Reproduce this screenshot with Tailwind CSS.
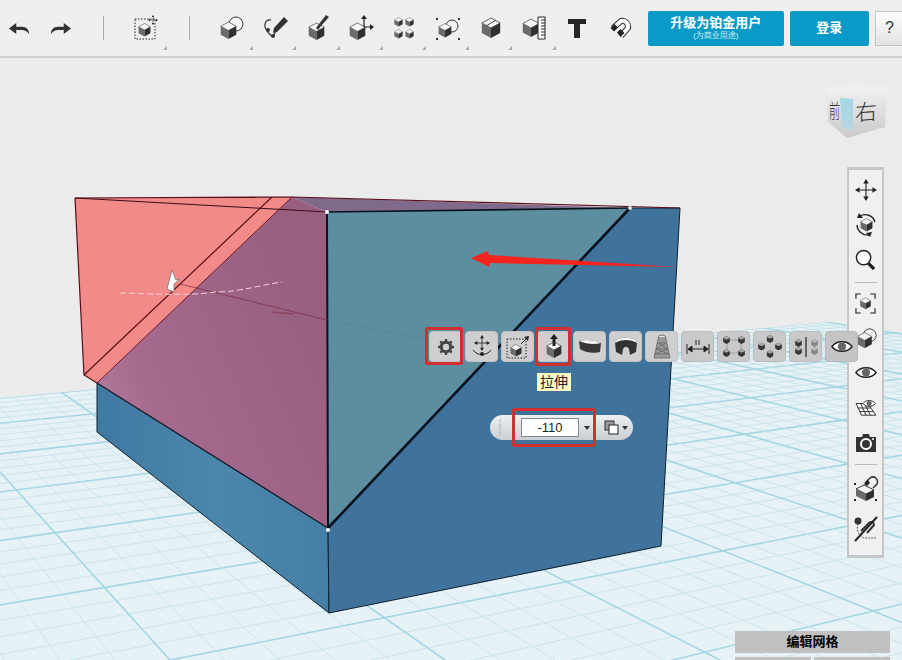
<!DOCTYPE html>
<html lang="zh">
  <head>
    <meta charset="UTF-8" />
    <meta name="viewport" content="width=device-width, initial-scale=1.0" />
    <title>123D Design</title>
    <script src="https://cdn.jsdelivr.net/npm/@tailwindcss/browser@4"></script>
  </head>
  <body class="bg-[#ebebeb] font-['Liberation_Sans','Noto_Sans_CJK_SC',sans-serif]">
    <!-- shared icon parts -->
    <svg class="hidden">
      <symbol id="cube" viewBox="0 0 24 26">
        <polygon points="12,1 23,7 12,13 1,7" fill="#f5f5f5" stroke="#444" stroke-width="1" />
        <polygon points="1,7 12,13 12,25 1,19" fill="#6b6b6b" />
        <polygon points="23,7 12,13 12,25 23,19" fill="#303030" />
      </symbol>
      <symbol id="dot" viewBox="0 0 10 12">
        <polygon points="5,0 10,3 10,9 5,12 0,9 0,3" fill="#363636" />
        <polygon points="5,0 10,3 5,5.5 0,3" fill="#a8a8a8" />
      </symbol>
      <symbol id="eye" viewBox="0 0 24 16">
        <path d="M1 8 C6 1 18 1 23 8 C18 15 6 15 1 8 Z" fill="#fff" stroke="#222" stroke-width="1.6" />
        <circle cx="12" cy="8" r="4.5" fill="#666" />
      </symbol>
      <symbol id="cross" viewBox="0 0 24 24">
        <path d="M12 2 V22 M2 12 H22" stroke="#222" stroke-width="1.2" fill="none" />
        <path d="M12 0 L15 5 H9 Z M12 24 L15 19 H9 Z M0 12 L5 9 V15 Z M24 12 L19 9 V15 Z" fill="#222" />
      </symbol>
    </svg>

    <div class="relative flex flex-col w-[902px] h-[660px] overflow-hidden">
      <!-- top toolbar -->
      <header class="flex items-center h-[58px] shrink-0 bg-[#efefef] border-b-2 border-[#cfcfcf]">
        <div class="flex items-center justify-center shrink-0 w-[37px] h-[52px]">
          <svg class="w-[22px] h-[13px]" viewBox="0 0 24 14"><path d="M1 7 L9 1 V5 H15 C20 5 23 8 23 13 C21 10 18 8.5 15 8.5 H9 V13 Z" fill="#333" /></svg>
        </div>
        <div class="flex items-center justify-center shrink-0 w-[47px] h-[52px]">
          <svg class="w-[22px] h-[13px] -scale-x-100" viewBox="0 0 24 14"><path d="M1 7 L9 1 V5 H15 C20 5 23 8 23 13 C21 10 18 8.5 15 8.5 H9 V13 Z" fill="#333" /></svg>
        </div>
        <div class="ml-[19px] shrink-0 w-px h-[24px] bg-[#aaa]"></div>
        <div class="relative flex items-center justify-center shrink-0 w-[85px] h-[52px]">
          <svg class="w-[26px] h-[26px]" viewBox="0 0 26 26">
            <rect x="1" y="4" width="20" height="20" fill="none" stroke="#222" stroke-dasharray="1.5 1.5" />
            <use href="#cube" x="4" y="8" width="13" height="14" />
            <use href="#cross" x="14" y="0" width="10" height="10" />
          </svg>
          <span class="absolute right-[22px] bottom-[4px] w-0 h-0 border-l-[4px] border-l-transparent border-b-[4px] border-b-[#aaa]"></span>
        </div>
        <div class="shrink-0 w-px h-[24px] bg-[#aaa]"></div>
        <div class="ml-[20px] flex shrink-0">
          <div class="relative flex items-center justify-center w-[43.2px] h-[52px]">
            <svg class="w-[26px] h-[26px]" viewBox="0 0 26 26">
              <circle cx="17" cy="9" r="7" fill="#f4f4f4" stroke="#333" />
              <use href="#cube" x="1" y="6" width="17" height="19" />
            </svg>
            <span class="absolute right-0 bottom-[4px] w-0 h-0 border-l-[4px] border-l-transparent border-b-[4px] border-b-[#aaa]"></span>
          </div>
          <div class="relative flex items-center justify-center w-[43.2px] h-[52px]">
            <svg class="w-[26px] h-[26px]" viewBox="0 0 26 26">
              <path d="M9 5 C3 4 1 11 5 16 C7 19 10 21 11 21 C13 19 14 16 14 12" fill="none" stroke="#333" stroke-width="1.2" />
              <circle cx="6" cy="15" r="2" fill="#333" /><circle cx="11" cy="21" r="2" fill="#333" />
              <path d="M12 13 L22 2 L26 6 L15 17 L11 18 Z" fill="#333" />
            </svg>
            <span class="absolute right-0 bottom-[4px] w-0 h-0 border-l-[4px] border-l-transparent border-b-[4px] border-b-[#aaa]"></span>
          </div>
          <div class="relative flex items-center justify-center w-[43.2px] h-[52px]">
            <svg class="w-[26px] h-[26px]" viewBox="0 0 26 26">
              <use href="#cube" x="3" y="7" width="17" height="19" />
              <path d="M11 13 L14 9 L21 0 L24 2 L16 11 L13 15 Z" fill="#333" />
            </svg>
            <span class="absolute right-0 bottom-[4px] w-0 h-0 border-l-[4px] border-l-transparent border-b-[4px] border-b-[#aaa]"></span>
          </div>
          <div class="relative flex items-center justify-center w-[43.2px] h-[52px]">
            <svg class="w-[26px] h-[26px]" viewBox="0 0 26 26">
              <use href="#cube" x="1" y="7" width="17" height="19" />
              <path d="M16 12 V2 M16 12 H24" stroke="#222" stroke-width="1.2" />
              <path d="M16 0 L19 4 H13 Z M26 12 L22 9 V15 Z" fill="#222" />
            </svg>
            <span class="absolute right-0 bottom-[4px] w-0 h-0 border-l-[4px] border-l-transparent border-b-[4px] border-b-[#aaa]"></span>
          </div>
          <div class="relative flex items-center justify-center w-[43.2px] h-[52px]">
            <svg class="w-[22px] h-[22px]" viewBox="0 0 22 22">
              <use href="#cube" x="1" y="0" width="9" height="10" /><use href="#cube" x="12" y="0" width="9" height="10" />
              <use href="#cube" x="1" y="12" width="9" height="10" /><use href="#cube" x="12" y="12" width="9" height="10" />
            </svg>
            <span class="absolute right-0 bottom-[4px] w-0 h-0 border-l-[4px] border-l-transparent border-b-[4px] border-b-[#aaa]"></span>
          </div>
          <div class="relative flex items-center justify-center w-[43.2px] h-[52px]">
            <svg class="w-[26px] h-[26px]" viewBox="0 0 26 26">
              <circle cx="17" cy="11" r="6" fill="#f4f4f4" stroke="#333" />
              <use href="#cube" x="3" y="8" width="14" height="15" />
              <path d="M1 3 h2 v2 h-2 Z M1 23 h2 v2 h-2 Z M23 3 h2 v2 h-2 Z M23 23 h2 v2 h-2 Z" fill="#333" />
            </svg>
            <span class="absolute right-0 bottom-[4px] w-0 h-0 border-l-[4px] border-l-transparent border-b-[4px] border-b-[#aaa]"></span>
          </div>
          <div class="relative flex items-center justify-center w-[43.2px] h-[52px]">
            <svg class="w-[24px] h-[24px]" viewBox="0 0 24 24">
              <use href="#cube" x="2" y="1" width="20" height="22" />
              <path d="M7 10 L17 4" stroke="#444" />
            </svg>
            <span class="absolute right-0 bottom-[4px] w-0 h-0 border-l-[4px] border-l-transparent border-b-[4px] border-b-[#aaa]"></span>
          </div>
          <div class="relative flex items-center justify-center w-[43.2px] h-[52px]">
            <svg class="w-[24px] h-[24px]" viewBox="0 0 24 24">
              <use href="#cube" x="0" y="2" width="18" height="20" />
              <path d="M16 1 H23 V23 H16 Z" fill="#fff" stroke="#222" />
              <path d="M19 4 H23 M19 7 H23 M19 10 H23 M19 13 H23 M19 16 H23 M19 19 H23" stroke="#222" />
            </svg>
            <span class="absolute right-0 bottom-[4px] w-0 h-0 border-l-[4px] border-l-transparent border-b-[4px] border-b-[#aaa]"></span>
          </div>
          <div class="flex items-center justify-center w-[43.2px] h-[52px]">
            <svg class="w-[20px] h-[21px]" viewBox="0 0 20 21"><path d="M1 1 H19 V6 H13 V20 H7 V6 H1 Z" fill="#262626" /></svg>
          </div>
          <div class="flex items-center justify-center w-[43.2px] h-[52px]">
            <svg class="w-[24px] h-[24px]" viewBox="0 0 24 24">
              <path d="M5 12 L13 5 A5.8 5.8 0 0 1 20 12 L13 20" fill="none" stroke="#333" stroke-width="6" />
              <path d="M5 12 L13 5 A5.8 5.8 0 0 1 20 12 L13 20" fill="none" stroke="#fff" stroke-width="4" />
              <path d="M2.5 12 L6.5 8 L10 11.5 L6 15.5 Z M9 16.5 L12.5 13 L16.5 17 L12.5 21 Z" fill="#222" />
            </svg>
          </div>
        </div>
        <button class="ml-[6px] flex flex-col items-center justify-center shrink-0 w-[136px] h-[35px] rounded-[2px] bg-[#0a9ac7] text-white">
          <span class="text-[13px] leading-[15px] font-bold">升级为铂金用户</span>
          <span class="text-[8px] leading-[11px] text-[#cfeaf3]">(为商业用途)</span>
        </button>
        <button class="ml-[6px] shrink-0 w-[79px] h-[35px] rounded-[2px] bg-[#0a9ac7] text-white text-[13px] font-bold">登录</button>
        <button class="ml-[6px] shrink-0 w-[34px] h-[35px] border border-[#c4c4c4] bg-linear-to-b from-white to-[#e2e2e2] text-[#333] text-[16px] text-left pl-[9px]">?</button>
      </header>

      <!-- 3D viewport -->
      <main class="relative flex-1">
        <svg class="absolute inset-0 w-[902px] h-[602px]" viewBox="0 58 902 602">
          <defs>
            <clipPath id="plane"><polygon points="0,398 830,322 902,333 902,660 0,660" /></clipPath>
            <linearGradient id="purple" x1="0" y1="1" x2="1" y2="0.4">
              <stop offset="0" stop-color="#b88aa8" />
              <stop offset="0.35" stop-color="#a56a8e" />
              <stop offset="1" stop-color="#985f80" />
            </linearGradient>
            <linearGradient id="side" x1="0" y1="0" x2="1" y2="0">
              <stop offset="0" stop-color="#4079a2" />
              <stop offset="0.5" stop-color="#4b86ab" />
              <stop offset="1" stop-color="#457fa6" />
            </linearGradient>
            <linearGradient id="navside" x1="0" y1="0" x2="0" y2="1">
              <stop offset="0" stop-color="#f2f2f2" />
              <stop offset="1" stop-color="#c9c9c9" />
            </linearGradient>
            <linearGradient id="navstripe" x1="0" y1="0" x2="0" y2="1">
              <stop offset="0" stop-color="#a4d8e6" />
              <stop offset="1" stop-color="#b4d6df" />
            </linearGradient>
          </defs>
          <g clip-path="url(#plane)">
            <rect x="0" y="300" width="902" height="360" fill="#e6f2f5" />
            <g id="grid"></g>
          </g>

          <!-- body -->
          <polygon points="97,383 328,528 329,613 97,432" fill="url(#side)" stroke="#10202c" stroke-width="1" />
          <polygon points="328,528 630,208 680,208 661,546 329,613" fill="#3f739c" stroke="#10202c" stroke-width="1" />
          <polygon points="292,197 327,212 328,528 97,383" fill="url(#purple)" />
          <polygon points="292,197 630,208 327,212" fill="#7f6a8c" />
          <polygon points="327,212 630,208 328,528" fill="#5c8ea0" />
          <polygon points="75,198 292,197 97,383 84,375" fill="#f28a8a" />
          <path d="M75 198 L292 197 L680 208 M75 198 L84 375 L97 383 M84 375 L272 197" fill="none" stroke="#5a0f18" stroke-width="1.2" />
          <path d="M97 383 L292 197" stroke="#6d1420" stroke-width="1" />
          <path d="M97 383 L328 528" stroke="#1a1a2a" stroke-width="1.2" />
          <path d="M75 198 L327 212" stroke="#3a0d18" stroke-width="1" />
          <path d="M327 212 L630 208" stroke="#06121e" stroke-width="1.6" />
          <path d="M327 212 L328 528" stroke="#06121e" stroke-width="2" />
          <path d="M630 208 L328 528" stroke="#06121e" stroke-width="2.6" />
          <path d="M180 284 L327 320" stroke="#7c2a3c" stroke-width="0.7" />
          <path d="M327 320 L430 340" stroke="#4a8194" stroke-width="0.5" />
          <path d="M120 293 C160 294 190 296 215 292 C240 292 260 285 282 282" fill="none" stroke="#f4d4dc" stroke-width="1" stroke-dasharray="6 3" />
          <path d="M272 312 L294 314" stroke="#7c2a3c" stroke-width="1.5" opacity="0.5" />
          <path d="M172 270 L176 280 L180 279 L174 284 L174 292 L167 289 Z" fill="#fff" stroke="#777" stroke-width="0.8" />
          <circle cx="327" cy="212" r="2" fill="#fff" />
          <circle cx="630" cy="208" r="2" fill="#cfe6ea" />
          <circle cx="328" cy="530" r="2" fill="#fff" />

          <!-- red arrow -->
          <path d="M678 267 L490 263 L489 267 L471 258 L488 251 L489 255 Z" fill="#f5241f" />

          <!-- nav cube -->
          <g>
            <polygon points="826,87 855,83 887,87 846,92" fill="#efefef" />
            <polygon points="826,87 846,92 847,138 828,122" fill="url(#navside)" />
            <polygon points="846,92 887,87 885,127 847,138" fill="url(#navside)" />
            <polygon points="840,98 853,99 853,130 842,128" fill="url(#navstripe)" />
            <text transform="translate(829 118) scale(0.62 1.1)" font-size="18" fill="#333" font-family="Noto Sans CJK SC, sans-serif" font-weight="300">前</text>
            <text transform="translate(855 121) skewY(-5)" font-size="22" fill="#333" font-family="Noto Sans CJK SC, sans-serif" font-weight="300">右</text>
          </g>
        </svg>

        <!-- right rail -->
        <aside class="absolute left-[847px] top-[109px] flex flex-col items-center w-[37px] h-[391px] bg-[#f0f0f2] border-2 border-t-[3px] border-b-[3px] border-[#c6c6c6]">
          <svg class="mt-[9px] w-[22px] h-[22px]" viewBox="0 0 24 24"><use href="#cross" width="24" height="24" /></svg>
          <svg class="mt-[12px] w-[24px] h-[24px]" viewBox="0 0 24 24">
            <use href="#cube" x="6" y="5" width="13" height="14" />
            <path d="M6 3 C11 0 19 2 21 9 M3 12 C3 17 8 23 15 22" fill="none" stroke="#222" stroke-width="1.4" />
            <path d="M5 0 L3 5 L9 5 Z M16 24 L18 19 L12 20 Z" fill="#222" />
          </svg>
          <svg class="mt-[12px] w-[21px] h-[21px]" viewBox="0 0 22 22">
            <circle cx="9" cy="9" r="7.5" fill="#fff" stroke="#222" stroke-width="1.5" />
            <path d="M14 15 L20 21" stroke="#222" stroke-width="3.5" />
          </svg>
          <div class="mt-[12px] w-[22px] h-px bg-[#bbb]"></div>
          <svg class="mt-[10px] w-[21px] h-[21px]" viewBox="0 0 22 22">
            <path d="M1 6 V1 H6 M16 1 H21 V6 M1 16 V21 H6 M16 21 H21 V16" fill="none" stroke="#222" stroke-width="1.2" />
            <use href="#cube" x="5" y="4" width="12" height="14" />
          </svg>
          <svg class="mt-[13px] w-[24px] h-[24px]" viewBox="0 0 26 26">
            <circle cx="17" cy="9" r="7" fill="#f4f4f4" stroke="#333" />
            <use href="#cube" x="3" y="5" width="17" height="19" />
          </svg>
          <svg class="mt-[14px] w-[22px] h-[15px]" viewBox="0 0 24 16"><use href="#eye" width="24" height="16" /></svg>
          <svg class="mt-[19px] w-[22px] h-[18px]" viewBox="0 0 24 20">
            <path d="M1 5 H14 L23 18 H7 Z M3 10 H17 M5 14 H20 M6 5 L12 18 M10 5 L17 18" fill="#fff" stroke="#222" />
            <use href="#eye" x="8" y="0" width="15" height="10" />
          </svg>
          <svg class="mt-[17px] w-[20px] h-[18px]" viewBox="0 0 20 18">
            <path d="M0 3 H6 L7 0 H13 L14 3 H20 V18 H0 Z" fill="#333" />
            <circle cx="10" cy="10" r="5" fill="none" stroke="#fff" stroke-width="2" />
            <circle cx="17" cy="5" r="1" fill="#fff" />
          </svg>
          <div class="mt-[12px] w-[22px] h-px bg-[#bbb]"></div>
          <svg class="mt-[11px] w-[26px] h-[26px]" viewBox="0 0 26 26">
            <polygon points="3,13 11,9 21,14 13,18" fill="#f4f4f4" stroke="#333" />
            <polygon points="3,13 13,18 13,25 3,20" fill="#6b6b6b" />
            <polygon points="21,14 13,18 13,25 21,21" fill="#303030" />
            <path d="M12 7 L17 2 C21 -1 26 3 24 8 L20 12" fill="none" stroke="#333" stroke-width="1.5" />
            <path d="M11 8 L15 4 L17 7 L14 10 Z" fill="#222" />
            <path d="M1 7 h2 v2 h-2 Z M1 23 h2 v2 h-2 Z M22 23 h2 v2 h-2 Z" fill="#222" />
          </svg>
          <svg class="mt-[14px] w-[24px] h-[26px]" viewBox="0 0 24 26">
            <circle cx="4" cy="5" r="3.5" fill="#333" />
            <path d="M4 8 C2 14 5 20 10 22 H22" fill="none" stroke="#333" stroke-dasharray="1.5 1.5" />
            <path d="M7 15 L15 7 C17 5 20 6 20 9 L13 17" fill="none" stroke="#333" stroke-width="2" />
            <path d="M1 25 L23 1" stroke="#222" stroke-width="2" />
          </svg>
        </aside>

        <!-- context toolbar -->
        <div class="absolute left-[429px] top-[273px] flex gap-[3px]">
          <div class="flex items-center justify-center w-[33px] h-[31px] rounded-[4px] bg-[#cfcfd2] border border-[#c2c2c4]">
            <svg class="w-[16px] h-[16px]" viewBox="0 0 16 16">
              <circle cx="8" cy="8" r="4.7" fill="none" stroke="#444" stroke-width="3" />
              <path d="M8 0 V3 M8 13 V16 M0 8 H3 M13 8 H16 M2.3 2.3 L4.3 4.3 M11.7 11.7 L13.7 13.7 M2.3 13.7 L4.3 11.7 M11.7 4.3 L13.7 2.3" stroke="#444" stroke-width="2.4" />
            </svg>
          </div>
          <div class="flex items-center justify-center w-[33px] h-[31px] rounded-[4px] bg-[#cfcfd2] border border-[#c2c2c4]">
            <svg class="w-[22px] h-[24px]" viewBox="0 0 22 24">
              <use href="#cross" x="3" y="0" width="16" height="16" />
              <path d="M2 15 C6 21 16 21 20 15" fill="none" stroke="#222" />
              <circle cx="11" cy="19" r="2" fill="#222" />
            </svg>
          </div>
          <div class="flex items-center justify-center w-[33px] h-[31px] rounded-[4px] bg-[#cfcfd2] border border-[#c2c2c4]">
            <svg class="w-[24px] h-[24px]" viewBox="0 0 24 24">
              <rect x="1" y="4" width="19" height="19" fill="none" stroke="#222" stroke-dasharray="1.5 1.5" />
              <use href="#cube" x="4" y="9" width="12" height="13" />
              <path d="M15 9 L21 3" stroke="#222" />
              <path d="M23 1 L22 6 L18 2 Z" fill="#222" />
            </svg>
          </div>
          <div class="flex items-center justify-center w-[33px] h-[31px] rounded-[4px] bg-[#cfcfd2] border border-[#c2c2c4]">
            <svg class="w-[22px] h-[26px]" viewBox="0 0 22 26">
              <use href="#cube" x="3" y="7" width="16" height="18" />
              <path d="M11 0 L15 5 H12.5 V12 H9.5 V5 H7 Z" fill="#222" />
            </svg>
          </div>
          <div class="flex items-center justify-center w-[33px] h-[31px] rounded-[4px] bg-[#cfcfd2] border border-[#c2c2c4]">
            <svg class="w-[24px] h-[16px]" viewBox="0 0 24 16">
              <path d="M1 2 C8 0 16 1 23 4 L22 13 C16 15 6 13 2 10 Z" fill="#383838" />
              <path d="M1 2 C8 0 16 1 23 4 C16 6 8 5 1 2 Z" fill="#f2f2f2" />
            </svg>
          </div>
          <div class="flex items-center justify-center w-[33px] h-[31px] rounded-[4px] bg-[#cfcfd2] border border-[#c2c2c4]">
            <svg class="w-[24px] h-[21px]" viewBox="0 0 24 21">
              <path d="M1 7 C1 0 23 0 23 7 L22 16 L16 19 L15 13 C13 10 11 10 9 13 L8 19 L2 16 Z" fill="#333" />
              <path d="M1 7 C1 0 23 0 23 7 C17 3 7 3 1 7 Z" fill="#f4f4f4" />
            </svg>
          </div>
          <div class="flex items-center justify-center w-[33px] h-[31px] rounded-[4px] bg-[#cfcfd2] border border-[#c2c2c4]">
            <svg class="w-[18px] h-[26px]" viewBox="0 0 18 26">
              <ellipse cx="9" cy="3" rx="3.5" ry="2" fill="#eee" stroke="#666" />
              <path d="M5.5 3 L1 24 H17 L12.5 3 M3 15 H15 M2 20 H16 M5 9 H13 M5 9 L15 15 M13 9 L3 15 M3 15 L16 20 M15 15 L2 20" fill="#9b9b9b" stroke="#666" stroke-width="0.8" />
            </svg>
          </div>
          <div class="flex items-center justify-center w-[33px] h-[31px] rounded-[4px] bg-[#c9c9cb] border border-[#bdbdbf]">
            <svg class="w-[24px] h-[14px]" viewBox="0 0 24 14">
              <path d="M1 4 V14 M23 4 V14 M2 9 H22" stroke="#222" />
              <path d="M2 9 L6 6 V12 Z M22 9 L18 6 V12 Z M10 0 V5 M13 0 V5" fill="#222" stroke="#222" />
            </svg>
          </div>
          <div class="flex items-center justify-center w-[33px] h-[31px] rounded-[4px] bg-[#c9c9cb] border border-[#bdbdbf]">
            <svg class="w-[22px] h-[21px]" viewBox="0 0 22 21">
              <path d="M4 4 H18 V17 H4 Z" fill="none" stroke="#888" stroke-width="0.6" />
              <use href="#dot" x="0" y="0" width="7" height="8" /><use href="#dot" x="15" y="0" width="7" height="8" />
              <use href="#dot" x="0" y="13" width="7" height="8" /><use href="#dot" x="15" y="13" width="7" height="8" />
            </svg>
          </div>
          <div class="flex items-center justify-center w-[33px] h-[31px] rounded-[4px] bg-[#c9c9cb] border border-[#bdbdbf]">
            <svg class="w-[24px] h-[23px]" viewBox="0 0 24 23">
              <use href="#dot" x="8.5" y="0" width="7" height="8" /><use href="#dot" x="0" y="7.5" width="7" height="8" />
              <use href="#dot" x="17" y="7.5" width="7" height="8" /><use href="#dot" x="8.5" y="15" width="7" height="8" />
            </svg>
          </div>
          <div class="flex items-center justify-center w-[33px] h-[31px] rounded-[4px] bg-[#c9c9cb] border border-[#bdbdbf]">
            <svg class="w-[24px] h-[22px]" viewBox="0 0 24 22">
              <use href="#dot" x="1" y="3" width="7" height="8" /><use href="#dot" x="1" y="11" width="7" height="8" />
              <path d="M12 1 V21" stroke="#222" stroke-width="1.2" />
              <g opacity="0.45"><use href="#dot" x="17" y="3" width="7" height="8" /><use href="#dot" x="17" y="11" width="7" height="8" /></g>
            </svg>
          </div>
          <div class="flex items-center justify-center w-[33px] h-[31px] rounded-[4px] bg-[#c4c4c6] border border-[#b8b8ba]">
            <svg class="w-[22px] h-[15px]" viewBox="0 0 24 16"><use href="#eye" width="24" height="16" /></svg>
          </div>
        </div>

        <!-- red highlights over the screenshot -->
        <div class="absolute left-[425px] top-[269px] w-[38px] h-[38px] border-[3px] border-[#d22f30] rounded-[2px]"></div>
        <div class="absolute left-[535px] top-[269px] w-[36px] h-[39px] border-[3px] border-[#d22f30] rounded-[2px]"></div>

        <!-- tooltip -->
        <div class="absolute left-[537px] top-[315px] w-[34px] h-[18px] bg-[#fdfbc4] text-[14px] leading-[18px] text-center text-[#222]">拉伸</div>

        <!-- value input -->
        <div class="absolute left-[490px] top-[357px] flex items-center w-[143px] h-[25px] rounded-full bg-linear-to-b from-[#eef0f2] to-[#c9ced3] pl-[9px]">
          <span class="w-[2px] h-[15px] border-x border-dotted border-[#b5b9bd]"></span>
          <input value="-110" class="ml-[20px] w-[58px] h-[19px] border border-[#7e8c92] bg-white text-center text-[13px] leading-[17px] text-[#222]" />
          <span class="ml-[5px] w-0 h-0 border-x-[3px] border-x-transparent border-t-[4px] border-t-[#333]"></span>
          <svg class="ml-[14px] w-[15px] h-[15px]" viewBox="0 0 15 15">
            <rect x="1" y="1" width="9" height="9" fill="#9b9b9b" stroke="#333" />
            <rect x="5" y="5" width="9" height="9" fill="#fff" stroke="#222" />
          </svg>
          <span class="ml-[3px] w-0 h-0 border-x-[3px] border-x-transparent border-t-[4px] border-t-[#333]"></span>
        </div>
        <div class="absolute left-[512px] top-[350px] w-[84px] h-[39px] border-[3px] border-[#d22f30] rounded-[2px]"></div>

        <!-- grid editing -->
        <div class="absolute left-[735px] top-[573px] w-[155px]">
          <div class="h-[22px] bg-[#c0c0c0] text-center text-[13px] leading-[22px] font-bold text-black">编辑网格</div>
          <div class="mt-[4px] flex gap-[3px]">
            <div class="flex-1 h-[4px] bg-[#c0c0c0]"></div>
            <div class="flex-1 h-[4px] bg-[#c0c0c0]"></div>
          </div>
        </div>
      </main>
    </div>

    <script>
      // ground grid: two families of lines running to the vanishing points
      const grid = document.getElementById("grid");
      const vpA = [2800, 140];
      const vpB = [-300, 140];

      function addLine(x1, y1, x2, y2, major) {
        const l = document.createElementNS("http://www.w3.org/2000/svg", "line");
        l.setAttribute("x1", x1);
        l.setAttribute("y1", y1);
        l.setAttribute("x2", x2);
        l.setAttribute("y2", y2);
        l.setAttribute("stroke", major ? "#a4d6e4" : "#c8e3eb");
        l.setAttribute("stroke-width", major ? 1.6 : 0.9);
        grid.appendChild(l);
      }

      // lines towards vpA, spaced through where they cross x=0
      for (let i = 0; i <= 40; i++) {
        const y = 140 + 1 / (0.003876 - (0.000345 * i) / 5);
        addLine(0, y, vpA[0], vpA[1], i % 5 === 0);
      }

      // lines towards vpB, evenly spaced along the bottom edge
      for (let i = -15; i <= 50; i++) {
        const x = 170 + 55 * i;
        addLine(x, 660, vpB[0], vpB[1], i % 5 === 0);
      }
    </script>
  </body>
</html>
